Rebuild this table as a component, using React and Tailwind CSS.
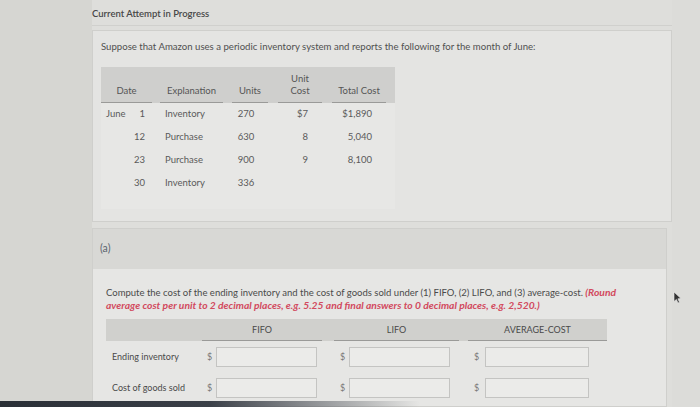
import React from "react";

const rows = [
  { month: "June", day: "1", what: "Inventory", units: "270", unit: "$7", total: "$1,890" },
  { month: "", day: "12", what: "Purchase", units: "630", unit: "8", total: "5,040" },
  { month: "", day: "23", what: "Purchase", units: "900", unit: "9", total: "8,100" },
  { month: "", day: "30", what: "Inventory", units: "336", unit: "", total: "" },
];

const answerRows = ["Ending inventory", "Cost of goods sold"];

const Box = ({ w }) => (
  <div className={`h-[20px] ${w} border border-[#c4c4c2] bg-[#ebebe9]`} />
);

const App = () => {
  return (
    <div
      className="relative w-[700px] h-[407px] overflow-hidden flex bg-[#d9d9d6] text-[#4d4d4d]"
      style={{ fontFamily: "Lato, 'Open Sans', sans-serif" }}
    >
      {/* left margin of the page */}
      <div className="w-[92px] shrink-0 bg-[#d6d6d2]" />

      <div className="w-[580px] shrink-0 flex flex-col bg-[#dededb]">
        <div className="pt-[7px] h-[26px] text-[9.5px] leading-[14px] font-semibold text-[#474747] border-b border-[#d0d0cd]">
          Current Attempt in Progress
        </div>

        {/* problem card */}
        <div className="mt-[4px] h-[192px] bg-[#e4e4e2] border border-[#cfcfcc] pl-[8px] pt-[9px]">
          <p className="text-[9.6px] leading-[14px] text-[#505050]">
            Suppose that Amazon uses a periodic inventory system and reports the following for the month of June:
          </p>

          <div className="mt-[13px] w-[294px] bg-[#e7e7e5] pb-[14px]">
            <div className="h-[36px] bg-[#cfcfcd] flex items-end text-[9.5px] leading-[12px] text-[#555]">
              <div className="w-[51px] text-center pb-[5px] border-b border-[#9a9a98]">Date</div>
              <div className="ml-[8px] w-[63px] text-center pb-[5px] border-b border-[#9a9a98]">Explanation</div>
              <div className="ml-[9px] w-[36px] text-center pb-[5px] border-b border-[#9a9a98]">Units</div>
              <div className="ml-[10px] w-[44px] text-center pb-[5px] border-b border-[#9a9a98]">
                Unit
                <br />
                Cost
              </div>
              <div className="ml-[10px] w-[54px] text-center pb-[5px] border-b border-[#9a9a98]">Total Cost</div>
            </div>

            {rows.map((r) => (
              <div key={r.day} className="h-[23px] flex items-center text-[9.5px] text-[#5a5a5a]">
                <div className="w-[44px] flex justify-between pl-[5px]">
                  <span>{r.month}</span>
                  <span>{r.day}</span>
                </div>
                <div className="ml-[20px] w-[62px]">{r.what}</div>
                <div className="ml-[5px] w-[28px] text-center">{r.units}</div>
                <div className="w-[48px] text-right">{r.unit}</div>
                <div className="w-[64px] text-right">{r.total}</div>
              </div>
            ))}
          </div>
        </div>

        {/* part (a) */}
        <div className="mt-[6px] w-[575px] flex-1 bg-[#e6e6e4] border border-[#cfcfcc] flex flex-col">
          <div className="h-[40px] shrink-0 bg-[#d8d8d5] flex items-center pl-[7px] text-[10.5px] text-[#5b6470]">
            (a)
          </div>
          <div className="pl-[13px] pt-[17px]">
            <p className="text-[9.5px] leading-[12px] text-[#4a4a4a] whitespace-nowrap">
              Compute the cost of the ending inventory and the cost of goods sold under (1) FIFO, (2) LIFO, and (3) average-cost.{" "}
              <span className="text-[10.3px] font-bold italic text-[#d24a5e]">
                (Round
                <br />
                average cost per unit to 2 decimal places, e.g. 5.25 and final answers to 0 decimal places, e.g. 2,520.)
              </span>
            </p>

            <div className="mt-[7px] w-[501px] h-[22px] bg-[#d0d0cd] flex items-end text-[9px] text-[#4a4a4a]">
              <div className="w-[96px]" />
              <div className="w-[120px] h-full flex items-center justify-center border-b border-[#9a9a98]">FIFO</div>
              <div className="ml-[12px] w-[125px] h-full flex items-center justify-center border-b border-[#9a9a98]">LIFO</div>
              <div className="ml-[9px] w-[139px] h-full flex items-center justify-center border-b border-[#9a9a98]">AVERAGE-COST</div>
            </div>

            {answerRows.map((label) => (
              <div key={label} className="h-[31px] flex items-center text-[9px] text-[#4a4a4a]">
                <div className="w-[101px] pl-[6px]">{label}</div>
                <span className="w-[9px] text-[#777]">$</span>
                <Box w="w-[101px]" />
                <span className="ml-[23px] w-[9px] text-[#777]">$</span>
                <Box w="w-[101px]" />
                <span className="ml-[24px] w-[11px] text-[#777]">$</span>
                <Box w="w-[104px]" />
              </div>
            ))}
          </div>
        </div>
      </div>

      <div className="flex-1 bg-[#dcdcd9]" />

      {/* mouse pointer */}
      <svg className="absolute left-[673px] top-[291px]" width="9" height="13" viewBox="0 0 9 13">
        <path d="M1 1 L1 10.5 L3.4 8.4 L5 12 L6.5 11.3 L4.9 7.8 L8 7.6 Z" fill="#333" stroke="#eee" strokeWidth="0.6" />
      </svg>

      {/* bottom edge of the screen */}
      <div className="absolute left-0 bottom-0 w-[420px] h-[6px] bg-gradient-to-r from-[#2a2f36] via-[#3b4048] to-transparent" />
    </div>
  );
};

export default App;
